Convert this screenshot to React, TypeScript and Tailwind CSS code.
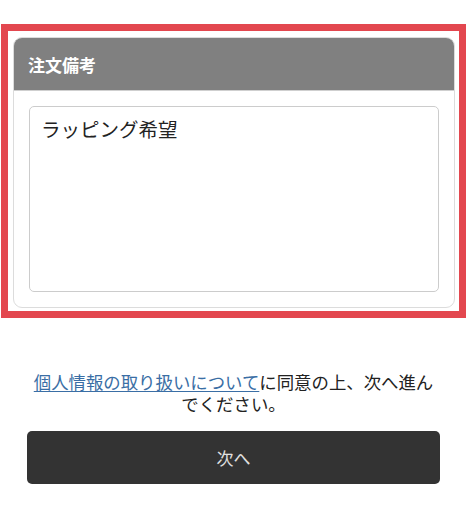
export default function App() {
  return (
    <div
      className="w-[468px] h-[512px] bg-white pt-[24px]"
      style={{ fontFamily: '"Noto Sans CJK JP", "Noto Sans", sans-serif' }}
    >
      <div className="ml-[1px] w-[465px] border-[7px] border-[#e3474f] pl-[5px] pr-[4px] pt-[6px] pb-[3px]">
        <div className="rounded-[9px] border border-[#dcdcdc] overflow-hidden bg-white">
          <div className="h-[53px] bg-[#808080] border-b border-[#cfcfcf] flex items-center px-[14px]">
            <h2 className="text-[17px] font-bold text-white leading-none">注文備考</h2>
          </div>
          <div className="p-[15px]">
            <textarea
              readOnly
              defaultValue="ラッピング希望"
              className="block w-full h-[186px] resize-none rounded-[5px] border border-[#cccccc] px-[11px] py-[7px] text-[19.5px] leading-[30px] text-[#222] outline-none"
              style={{ fontFamily: 'inherit' }}
            />
          </div>
        </div>
      </div>

      <div className="pl-[27px] pr-[28px] mt-[53px]">
        <p className="text-center text-[17.4px] leading-[22px] text-[#222]">
          <a href="#" className="text-[#3a6ea5] underline underline-offset-2">
            個人情報の取り扱いについて
          </a>
          に同意の上、次へ進んでください。
        </p>
        <button
          type="button"
          className="mt-[16px] w-full h-[53px] rounded-[5px] bg-[#333333] text-[#e0e0e0] text-[17px] flex items-center justify-center"
        >
          次へ
        </button>
      </div>
    </div>
  );
}
